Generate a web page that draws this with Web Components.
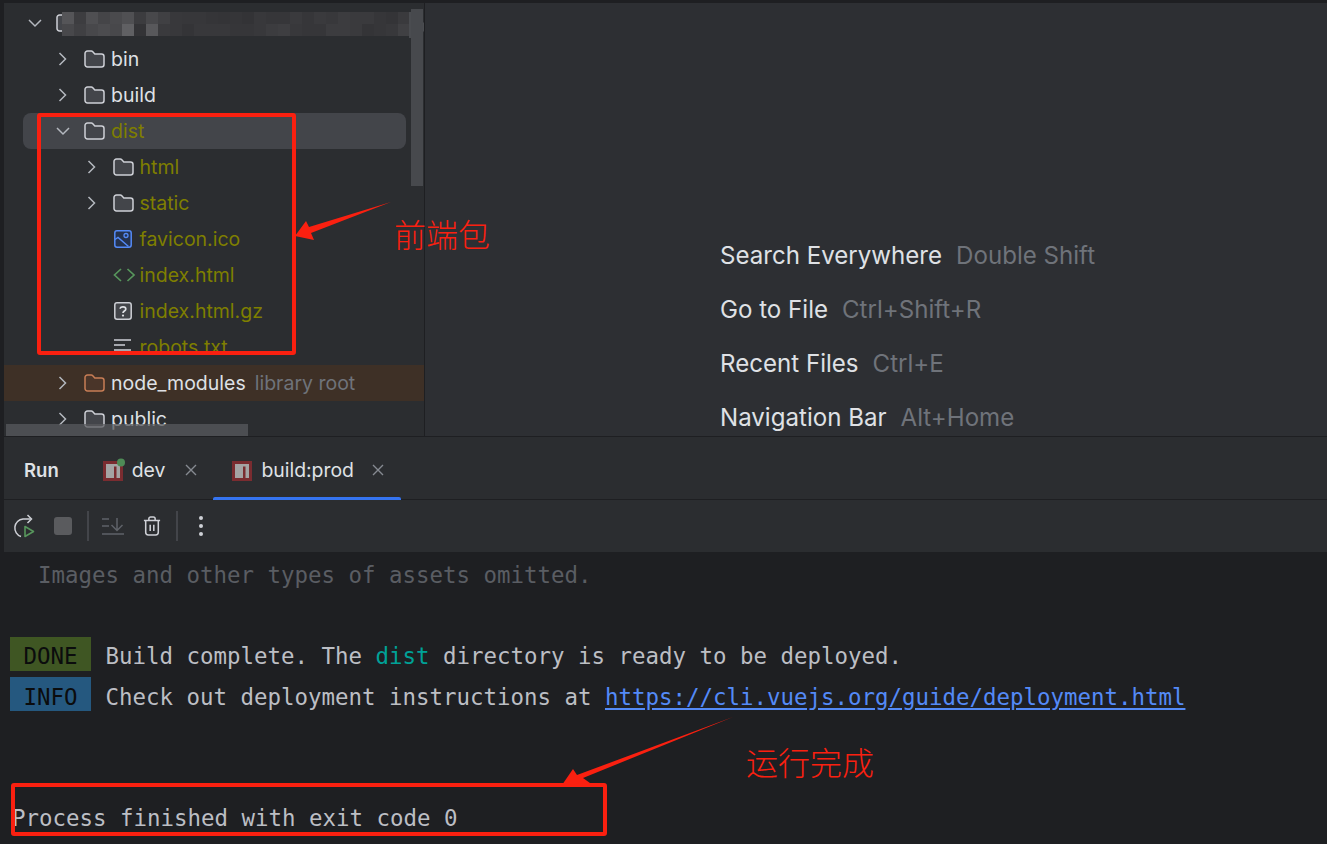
<!DOCTYPE html>
<html>
<head>
<meta charset="utf-8">
<title>Run</title>
<style>
  html, body { margin: 0; height: 100%; overflow: hidden; background: #1e1f22; }
  body { font-family: Inter, "Noto Sans", sans-serif; }
</style>
</head>
<body>
<ide-app>
  <project-tree slot="tree">
    <tree-row level="0" arrow="down" icon="folder" blank></tree-row>
    <tree-row level="1" arrow="right" icon="folder">bin</tree-row>
    <tree-row level="1" arrow="right" icon="folder">build</tree-row>
    <tree-row level="1" arrow="down" icon="folder" selected ignored>dist</tree-row>
    <tree-row level="2" arrow="right" icon="folder" ignored>html</tree-row>
    <tree-row level="2" arrow="right" icon="folder" ignored>static</tree-row>
    <tree-row level="2" icon="image" ignored>favicon.ico</tree-row>
    <tree-row level="2" icon="html" ignored>index.html</tree-row>
    <tree-row level="2" icon="unknown" ignored>index.html.gz</tree-row>
    <tree-row level="2" icon="text" ignored clipped>robots.txt</tree-row>
    <tree-row level="1" arrow="right" icon="libfolder" library note="library root">node_modules</tree-row>
    <tree-row level="1" arrow="right" icon="folder">public</tree-row>
  </project-tree>
  <editor-hints slot="editor">
    <hint-row keys="Double Shift">Search Everywhere</hint-row>
    <hint-row keys="Ctrl+Shift+R">Go to File</hint-row>
    <hint-row keys="Ctrl+E">Recent Files</hint-row>
    <hint-row keys="Alt+Home">Navigation Bar</hint-row>
  </editor-hints>
  <run-tabs slot="run"></run-tabs>
  <run-toolbar slot="run"></run-toolbar>
  <run-console slot="run"></run-console>
</ide-app>
<ide-annotations></ide-annotations>

<script>
const ICONS = {
  folder: `<svg width="21" height="18" viewBox="0 0 21 18"><path d="M1 3.5A2.5 2.5 0 0 1 3.5 1H7.3c.6 0 1.1.25 1.5.7L10.8 4H17.5A2.5 2.5 0 0 1 20 6.5V14.5A2.5 2.5 0 0 1 17.5 17H3.5A2.5 2.5 0 0 1 1 14.5Z" fill="#43454a" stroke="#ced0d6" stroke-width="1.5"/></svg>`,
  libfolder: `<svg width="21" height="18" viewBox="0 0 21 18"><path d="M1 3.5A2.5 2.5 0 0 1 3.5 1H7.3c.6 0 1.1.25 1.5.7L10.8 4H17.5A2.5 2.5 0 0 1 20 6.5V14.5A2.5 2.5 0 0 1 17.5 17H3.5A2.5 2.5 0 0 1 1 14.5Z" fill="#4a3529" stroke="#c77d55" stroke-width="1.5"/></svg>`,
  image: `<svg width="21" height="18" viewBox="0 0 21 18"><rect x="1.8" y="0.8" width="16.4" height="16.4" rx="2.2" fill="#25324d" stroke="#548af7" stroke-width="1.5"/><circle cx="13" cy="5.5" r="2" fill="none" stroke="#548af7" stroke-width="1.3"/><path d="M2 9.5L5 7.5L15.5 16.5" fill="none" stroke="#548af7" stroke-width="1.4"/></svg>`,
  html: `<svg width="23" height="18" viewBox="0 0 23 18"><path d="M8 3L1.5 9L8 15M14.5 3L21 9L14.5 15" fill="none" stroke="#57965c" stroke-width="1.7"/></svg>`,
  unknown: `<svg width="21" height="18" viewBox="0 0 21 18"><rect x="1.8" y="0.8" width="16.4" height="16.4" rx="2.2" fill="#43454a" stroke="#ced0d6" stroke-width="1.5"/><path d="M7.2 6.8C7.2 4.2 12.8 4.2 12.8 6.9C12.8 9 10 9 10 11" fill="none" stroke="#dfe1e5" stroke-width="1.7"/><circle cx="10" cy="13.6" r="1.1" fill="#dfe1e5"/></svg>`,
  text: `<svg width="21" height="18" viewBox="0 0 21 18"><path d="M1 2H18M1 7H12M1 12H18" fill="none" stroke="#ced0d6" stroke-width="1.6"/></svg>`
};
const CHEVRONS = {
  right: `<svg width="20" height="16" viewBox="0 0 20 16"><path d="M6.5 2L12.5 8L6.5 14" fill="none" stroke="#b4b8bf" stroke-width="1.5"/></svg>`,
  down: `<svg width="20" height="16" viewBox="0 0 20 16"><path d="M4 5L10 11L16 5" fill="none" stroke="#b4b8bf" stroke-width="1.5"/></svg>`
};

class IdeApp extends HTMLElement {
  constructor() {
    super();
    this.attachShadow({ mode: 'open' });
    this.shadowRoot.innerHTML = `
      <style>
        :host { display: flex; flex-direction: column; width: 1327px; height: 844px; padding-top: 3px; box-sizing: border-box; background: #1e1f22; }
        .top { display: flex; height: 433px; margin-left: 4px; flex: none; }
        .tree { width: 420px; flex: none; background: #2b2d30; }
        .divider { width: 1px; flex: none; background: #1e1f22; }
        .editor { flex: 1; min-width: 0; background: #2d2f33; overflow: hidden; }
        .run { flex: 1; min-height: 0; margin: 1px 0 0 4px; display: flex; flex-direction: column; background: #2b2d30; }
      </style>
      <div class="top">
        <div class="tree"><slot name="tree"></slot></div>
        <div class="divider"></div>
        <div class="editor"><slot name="editor"></slot></div>
      </div>
      <div class="run"><slot name="run"></slot></div>
    `;
  }
}

class ProjectTree extends HTMLElement {
  constructor() {
    super();
    this.attachShadow({ mode: 'open' });
    // blurred project name, copied as a two row mosaic
    const top = '55 3d 4f 45 4a 50 3c 48 40 38 37 37 35 34 35 33 38 36 36 3a 36 3a 38 3c 3a 3a 36 34 3a 38'.split(' ');
    const bottom = '48 40 48 4c 48 60 33 58 3a 38 34 38 38 38 36 36 38 3c 3e 38 36 36 3c 3c 3a 34 36 38 40 44'.split(' ');
    const cells = (row, y) => row.map((c, i) =>
      `<rect x="${i * 12}" y="${y}" width="12" height="12" fill="#${c}${c}${(parseInt(c, 16) + 3).toString(16)}"/>`).join('');
    this.shadowRoot.innerHTML = `
      <style>
        :host { display: block; position: relative; height: 100%; padding-top: 2px; box-sizing: border-box; overflow: hidden; }
        .mosaic { position: absolute; left: 58px; top: 9px; }
        .vbar { position: absolute; left: 407px; top: 6px; width: 12px; height: 177px; background: #47494d; }
        .hbar { position: absolute; left: 2px; top: 421px; width: 242px; height: 12px; background: rgba(88, 90, 94, 0.75); }
      </style>
      <slot></slot>
      <svg class="mosaic" width="368" height="26" viewBox="0 0 368 26">
        ${cells(top, 0)}${cells(bottom, 12)}
        <path d="M347 0h13v9l6 6l-6 6v5h-13Z" fill="#4a4c50"/>
      </svg>
      <div class="vbar"></div>
      <div class="hbar"></div>
    `;
  }
}

class TreeRow extends HTMLElement {
  constructor() {
    super();
    this.attachShadow({ mode: 'open' });
  }

  connectedCallback() {
    const level = Number(this.getAttribute('level') || 0);
    const arrow = this.getAttribute('arrow');
    const icon = this.getAttribute('icon');
    const note = this.getAttribute('note');
    this.shadowRoot.innerHTML = `
      <style>
        :host { display: block; height: 36px; font-size: 19.5px; color: #dfe1e5; }
        :host([library]) { background: #3e3026; }
        .row { position: relative; display: flex; align-items: center; height: 36px; box-sizing: border-box; white-space: nowrap; }
        :host([selected]) .row::before { content: ""; position: absolute; left: 19px; right: 18px; top: 0; bottom: 0; background: #43454a; border-radius: 8px; }
        :host([ignored]) .label { color: #7f7f00; }
        :host([clipped]) .row { clip-path: inset(0 0 13px 0); }
        :host([blank]) .label { display: none; }
        .arrow, .icon, .label, .note { position: relative; }
        .arrow { width: 20px; height: 16px; flex: none; }
        .icon { width: 21px; height: 18px; flex: none; margin-left: 11px; margin-right: 6px; }
        .note { color: #6f737a; margin-left: 9px; }
        svg { display: block; }
      </style>
      <div class="row" style="padding-left:${20.5 + level * 28.5}px">
        <span class="arrow">${arrow ? CHEVRONS[arrow] : ''}</span>
        <span class="icon">${ICONS[icon]}</span>
        <span class="label"><slot></slot></span>
        ${note ? `<span class="note">${note}</span>` : ''}
      </div>
    `;
  }
}

class EditorHints extends HTMLElement {
  constructor() {
    super();
    this.attachShadow({ mode: 'open' });
    this.shadowRoot.innerHTML = `
      <style>
        :host { display: block; padding: 225px 0 0 295px; }
      </style>
      <slot></slot>
    `;
  }
}

class HintRow extends HTMLElement {
  constructor() {
    super();
    this.attachShadow({ mode: 'open' });
  }

  connectedCallback() {
    this.shadowRoot.innerHTML = `
      <style>
        :host { display: flex; align-items: center; gap: 14px; height: 54px; font-size: 24.1px; color: #dfe1e5; white-space: nowrap; }
        .keys { color: #6f737a; }
      </style>
      <span><slot></slot></span>
      <span class="keys">${this.getAttribute('keys')}</span>
    `;
  }
}

class RunTabs extends HTMLElement {
  constructor() {
    super();
    this.attachShadow({ mode: 'open' });
    const npm = (dot) => `<svg class="npm" width="22" height="24" viewBox="0 0 22 24">
      <rect x="0" y="3" width="20" height="20" fill="#7a2c30"/><rect x="3" y="6" width="14" height="14" fill="#a4a4a4"/><rect x="11" y="8.5" width="2.5" height="11.5" fill="#7a2c30"/>
      ${dot ? '<circle cx="18" cy="4.5" r="4" fill="#4e8b56"/>' : ''}</svg>`;
    const close = `<svg class="close" width="12" height="12" viewBox="0 0 12 12"><path d="M1 1L11 11M11 1L1 11" stroke="#868a91" stroke-width="1.4"/></svg>`;
    this.shadowRoot.innerHTML = `
      <style>
        :host { display: flex; align-items: stretch; height: 63px; flex: none; box-sizing: border-box; border-bottom: 1px solid #1e1f22; font-size: 19.4px; color: #dfe1e5; white-space: nowrap; }
        .title { font-weight: 600; font-size: 18.5px; margin: 3px 44px 0 20px; align-self: center; }
        .tab { position: relative; display: flex; align-items: center; padding: 3px 17px 0 19px; }
        .dev { padding-left: 0; padding-right: 16px; }
        .npm { margin-right: 7px; }
        .close { margin-left: 20px; }
        .active .close { margin-left: 18px; }
        .active::after { content: ""; position: absolute; left: 0; right: 0; bottom: -1px; height: 3px; border-radius: 2px 2px 0 0; background: #3574f0; }
      </style>
      <span class="title">Run</span>
      <div class="tab dev">${npm(true)}<span>dev</span>${close}</div>
      <div class="tab active">${npm(false)}<span>build:prod</span>${close}</div>
    `;
  }
}

class RunToolbar extends HTMLElement {
  constructor() {
    super();
    this.attachShadow({ mode: 'open' });
    this.shadowRoot.innerHTML = `
      <style>
        :host { display: flex; align-items: center; height: 52px; flex: none; padding-left: 8px; box-sizing: border-box; }
        svg { display: block; flex: none; }
        .sep { width: 2px; height: 30px; background: #43454a; flex: none; }
      </style>
      <svg width="24" height="24" viewBox="0 0 24 24" style="margin-right:18px">
        <path d="M18.5 5H11A9 9 0 0 0 9 22.5" fill="none" stroke="#ced0d6" stroke-width="1.5"/>
        <path d="M15.5 1L19.5 5L15.5 9" fill="none" stroke="#ced0d6" stroke-width="1.5"/>
        <path d="M13 12.5V22.5L21.5 17.5Z" fill="none" stroke="#57965c" stroke-width="1.6" stroke-linejoin="round"/>
      </svg>
      <svg width="18" height="18" viewBox="0 0 18 18" style="margin-right:15px"><rect width="18" height="18" rx="3" fill="#5a5b5e"/></svg>
      <div class="sep"></div>
      <svg width="24" height="20" viewBox="0 0 24 20" style="margin:0 18px 0 12px">
        <path d="M1 3H8M1 10H8M1 18H23M16 2V14M10.5 9L16 14.5L21.5 9" fill="none" stroke="#5f6268" stroke-width="1.5"/>
      </svg>
      <svg width="18" height="22" viewBox="0 0 20 22" style="margin-right:15px">
        <path d="M1 5H19M6.5 5V3A2 2 0 0 1 8.5 1H11.5A2 2 0 0 1 13.5 3V5M3 5V18A3 3 0 0 0 6 21H14A3 3 0 0 0 17 18V5M8 9.5V16.5M12 9.5V16.5" fill="none" stroke="#ced0d6" stroke-width="1.7"/>
      </svg>
      <div class="sep"></div>
      <svg width="6" height="22" viewBox="0 0 6 22" style="margin-left:20px">
        <circle cx="3" cy="3" r="2" fill="#ced0d6"/><circle cx="3" cy="11" r="2" fill="#ced0d6"/><circle cx="3" cy="19" r="2" fill="#ced0d6"/>
      </svg>
    `;
  }
}

class RunConsole extends HTMLElement {
  constructor() {
    super();
    this.attachShadow({ mode: 'open' });
    this.shadowRoot.innerHTML = `
      <style>
        :host { display: block; flex: 1; min-height: 0; overflow: hidden; padding: 3px 0 0 6px; background: #1e1f22; font-family: "DejaVu Sans Mono", "Liberation Mono", monospace; font-size: 22.43px; color: #bcbec4; }
        .line { height: 40.5px; line-height: 40.5px; white-space: pre; }
        .dim { color: #5a5d63; padding-left: 1px; }
        .end { padding-left: 2px; }
        .tag { display: inline-block; height: 34px; vertical-align: middle; color: #0b0c0d; margin-right: 1px; }
        .done { background: #3f5623; margin-top: -7px; line-height: 38px; }
        .info { background: #25587f; margin-top: -9px; line-height: 40px; }
        .teal { color: #00a197; }
        a { color: #548af7; text-decoration: underline; text-underline-offset: 3px; }
      </style>
      <div class="line dim">  Images and other types of assets omitted.</div>
      <div class="line"></div>
      <div class="line"><span class="tag done"> DONE </span> Build complete. The <span class="teal">dist</span> directory is ready to be deployed.</div>
      <div class="line"><span class="tag info"> INFO </span> Check out deployment instructions at <a>https://cli.vuejs.org/guide/deployment.html</a></div>
      <div class="line"></div>
      <div class="line"></div>
      <div class="line end">Process finished with exit code 0</div>
    `;
  }
}

// the red marks drawn over the screenshot
class IdeAnnotations extends HTMLElement {
  constructor() {
    super();
    this.attachShadow({ mode: 'open' });
    this.shadowRoot.innerHTML = `
      <style>
        :host { position: absolute; left: 0; top: 0; width: 1327px; height: 844px; pointer-events: none; }
        .box { position: absolute; box-sizing: border-box; border: 4px solid #fa2010; border-radius: 3px; }
        .note { position: absolute; font-family: "Noto Sans CJK SC", sans-serif; font-weight: 300; font-size: 32px; line-height: 40px; color: #fa2010; white-space: nowrap; }
        svg { position: absolute; left: 0; top: 0; }
      </style>
      <div class="box" style="left:37px;top:113px;width:259px;height:242px"></div>
      <div class="box" style="left:11px;top:783px;width:596px;height:53px"></div>
      <svg width="1327" height="844" viewBox="0 0 1327 844">
        <polygon points="391,202 309,227 306,221 295,236 314,240 311,233" fill="#fa2010"/>
        <polygon points="733,717 577,775 573,769 562,785 590,783 583,778" fill="#fa2010"/>
      </svg>
      <div class="note" style="left:394px;top:213px">前端包</div>
      <div class="note" style="left:746px;top:741px">运行完成</div>
    `;
  }
}

customElements.define('ide-app', IdeApp);
customElements.define('project-tree', ProjectTree);
customElements.define('tree-row', TreeRow);
customElements.define('editor-hints', EditorHints);
customElements.define('hint-row', HintRow);
customElements.define('run-tabs', RunTabs);
customElements.define('run-toolbar', RunToolbar);
customElements.define('run-console', RunConsole);
customElements.define('ide-annotations', IdeAnnotations);
</script>
</body>
</html>
